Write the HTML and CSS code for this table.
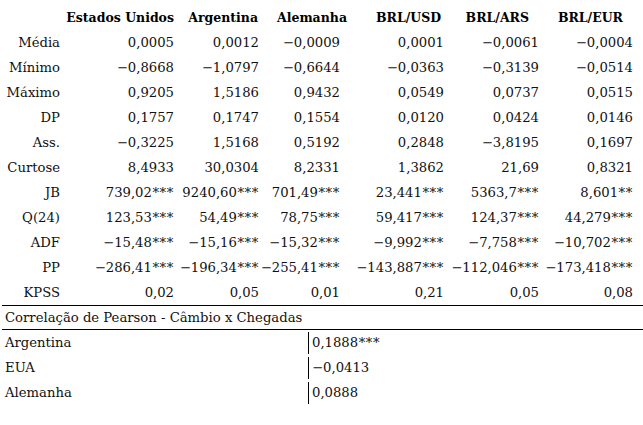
FILE: index.html
```html
<!DOCTYPE html>
<html lang="pt">
<head>
<meta charset="utf-8">
<title>Estatísticas</title>
<link rel="stylesheet" href="styles.css">
</head>
<body>
<div class="page">
  <div class="stats">
    <div class="hd"></div>
    <div class="hd">Estados Unidos</div>
    <div class="hd h-arg">Argentina</div>
    <div class="hd h-ale">Alemanha</div>
    <div class="hd h-usd">BRL/USD</div>
    <div class="hd h-ars">BRL/ARS</div>
    <div class="hd h-eur">BRL/EUR</div>

    <div class="lb">Média</div><div class="v">0,0005</div><div class="v">0,0012</div><div class="v">−0,0009</div><div class="v">0,0001</div><div class="v">−0,0061</div><div class="v">−0,0004</div>
    <div class="lb">Mínimo</div><div class="v">−0,8668</div><div class="v">−1,0797</div><div class="v">−0,6644</div><div class="v">−0,0363</div><div class="v">−0,3139</div><div class="v">−0,0514</div>
    <div class="lb">Máximo</div><div class="v">0,9205</div><div class="v">1,5186</div><div class="v">0,9432</div><div class="v">0,0549</div><div class="v">0,0737</div><div class="v">0,0515</div>
    <div class="lb">DP</div><div class="v">0,1757</div><div class="v">0,1747</div><div class="v">0,1554</div><div class="v">0,0120</div><div class="v">0,0424</div><div class="v">0,0146</div>
    <div class="lb">Ass.</div><div class="v">−0,3225</div><div class="v">1,5168</div><div class="v">0,5192</div><div class="v">0,2848</div><div class="v">−3,8195</div><div class="v">0,1697</div>
    <div class="lb">Curtose</div><div class="v">8,4933</div><div class="v">30,0304</div><div class="v">8,2331</div><div class="v">1,3862</div><div class="v">21,69</div><div class="v">0,8321</div>
    <div class="lb">JB</div><div class="v">739,02<span class="sig">***</span></div><div class="v">9240,60<span class="sig">***</span></div><div class="v">701,49<span class="sig">***</span></div><div class="v">23,441<span class="sig">***</span></div><div class="v">5363,7<span class="sig">***</span></div><div class="v">8,601<span class="sig">**</span></div>
    <div class="lb">Q(24)</div><div class="v">123,53<span class="sig">***</span></div><div class="v">54,49<span class="sig">***</span></div><div class="v">78,75<span class="sig">***</span></div><div class="v">59,417<span class="sig">***</span></div><div class="v">124,37<span class="sig">***</span></div><div class="v">44,279<span class="sig">***</span></div>
    <div class="lb">ADF</div><div class="v">−15,48<span class="sig">***</span></div><div class="v">−15,16<span class="sig">***</span></div><div class="v">−15,32<span class="sig">***</span></div><div class="v">−9,992<span class="sig">***</span></div><div class="v">−7,758<span class="sig">***</span></div><div class="v">−10,702<span class="sig">***</span></div>
    <div class="lb">PP</div><div class="v">−286,41<span class="sig">***</span></div><div class="v">−196,34<span class="sig">***</span></div><div class="v">−255,41<span class="sig">***</span></div><div class="v">−143,887<span class="sig">***</span></div><div class="v">−112,046<span class="sig">***</span></div><div class="v">−173,418<span class="sig">***</span></div>
    <div class="lb">KPSS</div><div class="v">0,02</div><div class="v">0,05</div><div class="v">0,01</div><div class="v">0,21</div><div class="v">0,05</div><div class="v">0,08</div>
  </div>
  <div class="corr-title">Correlação de Pearson - Câmbio x Chegadas</div>
  <div class="corr">
    <div class="cl">Argentina</div><div class="cv">0,1888<span class="sig">***</span></div>
    <div class="cl">EUA</div><div class="cv">−0,0413</div>
    <div class="cl">Alemanha</div><div class="cv">0,0888</div>
  </div>
</div>
</body>
</html>
```
FILE: styles.css
```css
html, body {
  margin: 0;
  padding: 0;
  background: #fff;
}
.page {
  width: 643px;
  padding-top: 5px;
  font-family: "DejaVu Serif", serif;
  font-size: 13.2px;
  color: #111;
}
.stats {
  display: grid;
  grid-template-columns: 58px 114px 85px 81px 104px 95px 94px;
  grid-auto-rows: 25px;
  align-items: center;
  border-bottom: 1.5px solid #000;
  margin-left: 2px;
}
.stats > div {
  text-align: right;
  white-space: nowrap;
}
.hd {
  font-weight: bold;
  font-size: 12.5px;
  color: #000;
}
.sig {
  letter-spacing: 0.6px;
  margin-left: 0.5px;
}
.h-arg { margin-right: 1px; }
.h-ale { margin-right: -7px; }
.h-usd { margin-right: 3px; }
.h-ars { margin-right: 10px; }
.h-eur { margin-right: 10px; }
.corr-title {
  height: 23px;
  line-height: 23px;
  padding-left: 3px;
  margin-left: 2px;
  border-bottom: 1.5px solid #000;
}
.corr {
  display: grid;
  grid-template-columns: 303px auto;
  grid-auto-rows: 25px;
  align-items: center;
  padding-left: 5px;
}
.cv {
  border-left: 1px solid #000;
  height: 22px;
  line-height: 22px;
  padding-left: 3px;
}
```
